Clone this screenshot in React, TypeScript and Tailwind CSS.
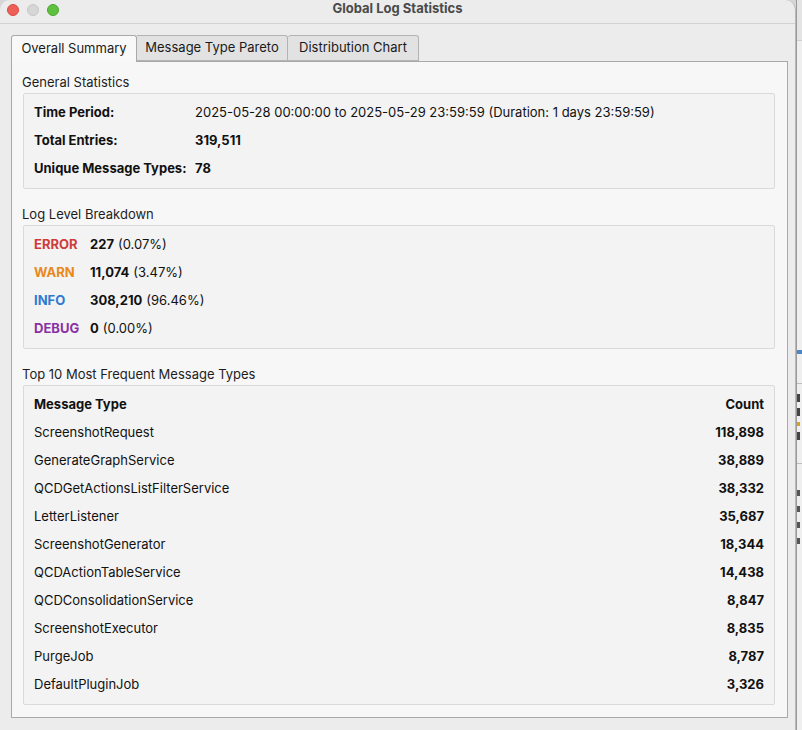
import React from "react";

const general = [
  { label: "Time Period:", value: "2025-05-28 00:00:00 to 2025-05-29 23:59:59 (Duration: 1 days 23:59:59)", bold: false },
  { label: "Total Entries:", value: "319,511", bold: true },
  { label: "Unique Message Types:", value: "78", bold: true },
];

const levels = [
  { name: "ERROR", color: "text-[#cf3b3b]", count: "227", pct: "(0.07%)" },
  { name: "WARN", color: "text-[#e8891c]", count: "11,074", pct: "(3.47%)" },
  { name: "INFO", color: "text-[#2f7ad1]", count: "308,210", pct: "(96.46%)" },
  { name: "DEBUG", color: "text-[#8a30a6]", count: "0", pct: "(0.00%)" },
];

const topTypes = [
  ["ScreenshotRequest", "118,898"],
  ["GenerateGraphService", "38,889"],
  ["QCDGetActionsListFilterService", "38,332"],
  ["LetterListener", "35,687"],
  ["ScreenshotGenerator", "18,344"],
  ["QCDActionTableService", "14,438"],
  ["QCDConsolidationService", "8,847"],
  ["ScreenshotExecutor", "8,835"],
  ["PurgeJob", "8,787"],
  ["DefaultPluginJob", "3,326"],
];

function Section({ title, children, className = "" }: { title: string; children: React.ReactNode; className?: string }) {
  return (
    <div className={className}>
      <div className="h-[16px] leading-[16px] pl-[10px] mb-[3px] text-[13px] text-[#1d1d1d]">{title}</div>
      <div className="ml-[11px] border border-[#dadada] bg-[#f3f3f3] rounded-[2px] py-[5px] px-[10px]">{children}</div>
    </div>
  );
}

export default function App() {
  return (
    <div className="w-[802px] h-[730px] flex bg-[#d6d6d6] overflow-hidden" style={{ fontFamily: "Inter, 'Liberation Sans', sans-serif" }}>
      {/* Window */}
      <div className="w-[796px] h-[730px] shrink-0 flex flex-col bg-[#ececec] rounded-t-[10px] border-r border-[#b8b8b8] overflow-hidden">
        {/* Title bar */}
        <div className="h-[24px] flex items-center relative border-b border-[#d2d2d2] shrink-0">
          <div className="flex gap-[8px] pl-[7px] -mt-[4px]">
            <span className="w-[12px] h-[12px] rounded-full bg-[#ee5f57] border border-[#d94b43]" />
            <span className="w-[12px] h-[12px] rounded-full bg-[#d6d6d6] border border-[#c6c6c6]" />
            <span className="w-[12px] h-[12px] rounded-full bg-[#5fc13f] border border-[#4aa82e]" />
          </div>
          <div className="absolute left-0 right-0 -top-[1px] text-center text-[13px] font-bold text-[#4a4a4a] pointer-events-none">Global Log Statistics</div>
        </div>

        {/* Tabs */}
        <div className="flex pl-[11px] pt-[11px] shrink-0">
          <div className="h-[27px] w-[126px] flex items-center justify-center text-[13px] text-[#1a1a1a] bg-[#f8f8f8] border border-[#a9a9a9] border-b-0 rounded-t-[3px] relative z-10 -mb-px">Overall Summary</div>
          <div className="h-[26px] w-[151px] flex items-center justify-center text-[13px] text-[#1a1a1a] bg-[#e2e2e2] border border-[#b3b3b3] border-l-0 rounded-tr-[3px]">Message Type Pareto</div>
          <div className="h-[26px] w-[131px] flex items-center justify-center text-[13px] text-[#1a1a1a] bg-[#e2e2e2] border border-[#b3b3b3] border-l-0 rounded-t-[3px]">Distribution Chart</div>
        </div>

        {/* Panel */}
        <div className="ml-[11px] mr-[7px] h-[657px] bg-[#f7f7f7] border border-[#a9a9a9] pt-[12px] pr-[12px]">
          <Section title="General Statistics">
            {general.map((r) => (
              <div key={r.label} className="h-[28px] flex items-center text-[13px] text-[#111]">
                <span className="w-[161px] font-bold">{r.label}</span>
                <span className={r.bold ? "font-bold" : ""}>{r.value}</span>
              </div>
            ))}
          </Section>

          <Section title="Log Level Breakdown" className="mt-[17px]">
            {levels.map((l) => (
              <div key={l.name} className="h-[28px] flex items-center text-[13px] text-[#111]">
                <span className={`w-[56px] font-bold ${l.color}`}>{l.name}</span>
                <span className="font-bold">{l.count}</span>
                <span className="ml-[4px]">{l.pct}</span>
              </div>
            ))}
          </Section>

          <Section title="Top 10 Most Frequent Message Types" className="mt-[17px]">
            <div className="h-[28px] flex items-center justify-between text-[13px] font-bold text-[#111]">
              <span>Message Type</span>
              <span>Count</span>
            </div>
            {topTypes.map(([name, count]) => (
              <div key={name} className="h-[28px] flex items-center justify-between text-[13px] text-[#111]">
                <span>{name}</span>
                <span className="font-bold">{count}</span>
              </div>
            ))}
          </Section>
        </div>
      </div>

      {/* Window behind, peeking out */}
      <div className="w-[6px] shrink-0 flex flex-col bg-[#efefef] border-l border-[#9a9a9a] overflow-hidden">
        <div className="h-[40px] bg-[#e4e4e4]" />
        <div className="h-[310px] border-t border-[#cfcfcf]" />
        <div className="h-[4px] bg-[#4a86c8]" />
        <div className="h-[30px] border-b border-[#bdbdbd]" />
        <div className="h-[80px] border-b border-[#bdbdbd] flex flex-col gap-[6px] pt-[10px]">
          <span className="w-[3px] h-[8px] bg-[#444]" />
          <span className="w-[3px] h-[8px] bg-[#444]" />
          <span className="w-[3px] h-[4px] bg-[#d9a21b]" />
          <span className="w-[3px] h-[8px] bg-[#444]" />
        </div>
        <div className="flex-1 flex flex-col gap-[10px] pt-[26px]">
          <span className="w-[3px] h-[6px] bg-[#555]" />
          <span className="w-[3px] h-[6px] bg-[#555]" />
          <span className="w-[3px] h-[6px] bg-[#555]" />
          <span className="w-[3px] h-[6px] bg-[#555]" />
        </div>
      </div>
    </div>
  );
}
